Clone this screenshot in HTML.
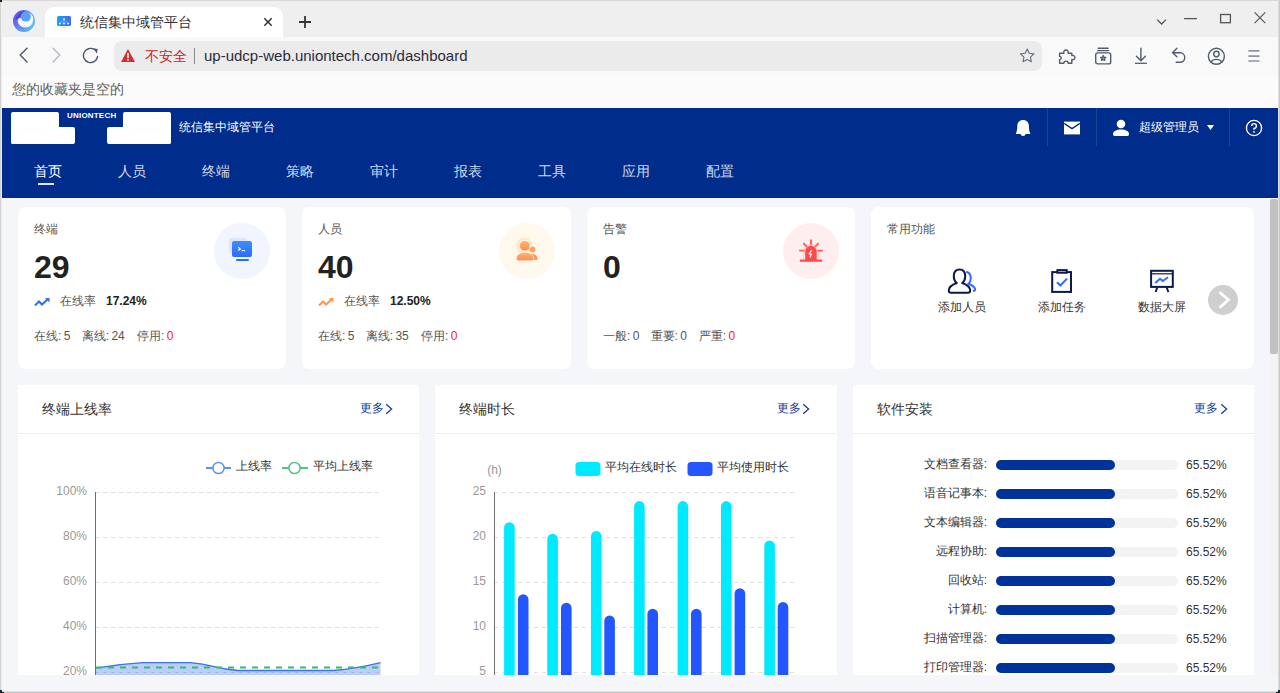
<!DOCTYPE html>
<html><head><meta charset="utf-8">
<style>
*{box-sizing:border-box;margin:0;padding:0}
html,body{width:1280px;height:693px;overflow:hidden;background:#fff;font-family:"Liberation Sans",sans-serif}
.abs{position:absolute}
#win{position:absolute;left:0;top:0;width:1280px;height:693px;background:#f5f6fa;overflow:hidden}
/* browser chrome */
#tabbar{left:0;top:0;width:1280px;height:37px;background:#efefef;border-top:1px solid #d8d8d8}
#tab{left:45px;top:7px;width:238px;height:30px;background:#fff;border-radius:9px 9px 0 0}
#toolbar{left:0;top:37px;width:1280px;height:37px;background:#f9f9f9}
#urlbar{left:114px;top:41px;width:928px;height:30px;background:#ebebeb;border-radius:8px}
#bmbar{left:0;top:74px;width:1280px;height:34px;background:#fbfbfb}
.ico{stroke:#535d6e;fill:none;stroke-width:1.4;stroke-linecap:round;stroke-linejoin:round}
/* app header */
#hdr{left:2px;top:108px;width:1276px;height:90px;background:#002c8b}
.nav{position:absolute;top:161px;color:#d3daea;font-size:14px;line-height:20px}
.vdiv{position:absolute;top:108px;width:1px;height:38px;background:#1f459a}
/* content */
.card{position:absolute;background:#fff;border-radius:8px}
.ctitle{position:absolute;font-size:12px;color:#555;line-height:16px}
.bignum{position:absolute;font-size:32px;font-weight:bold;color:#222;line-height:32px}
.small{position:absolute;font-size:12px;color:#555;line-height:14px;white-space:nowrap}
.panel{position:absolute;background:#fff;border-radius:2px}
.ptitle{position:absolute;left:24px;top:15px;font-size:14px;color:#333;line-height:18px}
.more{position:absolute;top:15px;font-size:12px;color:#163a98;line-height:16px}
.pline{position:absolute;left:0;top:48px;height:1px;background:#eaecf0}
.sw-row{position:absolute;left:0;width:400px;height:20px}
.sw-label{position:absolute;right:258px;font-size:13px;color:#333;line-height:16px;white-space:nowrap}
.sw-track{position:absolute;left:143px;top:4px;width:182px;height:10px;background:#f1f2f4;border-radius:5px}
.sw-bar{position:absolute;left:0;top:0;width:119px;height:10px;background:#003399;border-radius:5px}
.sw-pct{position:absolute;left:333px;font-size:12px;color:#333;line-height:14px}
</style></head>
<body>
<div id="win">
<!-- TAB BAR -->
<div id="tabbar" class="abs"></div>
<div class="abs" style="left:0;top:0;width:1px;height:693px;background:#d2d2d2;z-index:50"></div>
<div class="abs" style="left:1px;top:37px;width:1px;height:654px;background:#ececec;z-index:50"></div>
<div class="abs" style="left:1278px;top:0;width:1px;height:693px;background:#dedede;z-index:50"></div>
<div class="abs" style="left:1279px;top:0;width:1px;height:693px;background:#c9c9c9;z-index:50"></div>
<div class="abs" style="left:0;top:691px;width:1280px;height:1px;background:#dcdcdc;z-index:50"></div>
<div class="abs" style="left:0;top:692px;width:1280px;height:1px;background:#c8c8c8;z-index:50"></div>
<div class="abs" style="left:0;top:0;width:2px;height:2px;background:#222;z-index:51"></div>
<div class="abs" style="left:0;top:690px;width:2px;height:3px;background:#0d2a2a;z-index:51"></div>
<div class="abs" style="left:2px;top:692px;width:2px;height:1px;background:#0d2a2a;z-index:51"></div>
<div class="abs" style="left:1278px;top:690px;width:2px;height:3px;background:#0d2a2a;z-index:51"></div>
<div class="abs" style="left:1276px;top:692px;width:2px;height:1px;background:#0d2a2a;z-index:51"></div>
<div class="abs" style="left:2px;top:675px;width:1276px;height:16px;background:#f5f6fa;z-index:40"></div>
<!-- logo -->
<svg class="abs" style="left:13px;top:10px" width="22" height="22" viewBox="0 0 22 22">
<defs><linearGradient id="lg1" x1="0" y1="0.1" x2="1" y2="0.6"><stop offset="0" stop-color="#5a4ef0"/><stop offset="0.55" stop-color="#6b8af6"/><stop offset="1" stop-color="#4cc6f6"/></linearGradient>
<clipPath id="cp1"><circle cx="11" cy="11" r="11"/></clipPath></defs>
<circle cx="11" cy="11" r="11" fill="url(#lg1)"/>
<g clip-path="url(#cp1)">
<circle cx="12.4" cy="9.6" r="7.9" fill="#f6f7fb"/>
<path d="M2.5 9.5Q3.5 3 10.5 0.5L12.5 2Q8.2 3.8 7.6 8.2Q6 6.8 4.8 9.8Z" fill="#4b42ec"/>
<circle cx="12.8" cy="6.6" r="5" fill="#5aa0fb"/>
</g></svg>
<div id="tab" class="abs"></div>
<svg class="abs" style="left:57px;top:15px" width="14" height="14" viewBox="0 0 14 14">
<defs><linearGradient id="lg2" x1="0" y1="0" x2="1" y2="0"><stop offset="0" stop-color="#17a5ee"/><stop offset="1" stop-color="#3f66f6"/></linearGradient></defs>
<rect x="0" y="1" width="14" height="10" rx="1.6" fill="url(#lg2)"/>
<circle cx="7" cy="4.3" r="1.1" fill="#e8f2ff"/>
<path d="M2.8 8.5V7H11.2V8.5M7 5.5V7" stroke="#7cc4f8" stroke-width="0.7" fill="none"/>
<rect x="1.8" y="8" width="2" height="1.3" rx=".5" fill="#fff"/><rect x="6" y="8" width="2" height="1.3" rx=".5" fill="#fff"/><rect x="10.2" y="8" width="2" height="1.3" rx=".5" fill="#fff"/>
<rect x="5" y="12" width="4" height="1" fill="#e4e6ea"/>
</svg>
<div class="abs" style="left:80px;top:12px;font-size:14px;color:#333;line-height:20px">统信集中域管平台</div>
<svg class="abs" style="left:262px;top:16px" width="12" height="12" viewBox="0 0 12 12"><path d="M2.3 2.3L9.7 9.7M9.7 2.3L2.3 9.7" stroke="#333" stroke-width="1.5"/></svg>
<svg class="abs" style="left:298px;top:15px" width="14" height="14" viewBox="0 0 14 14"><path d="M7 1V13M1 7H13" stroke="#333" stroke-width="1.8"/></svg>
<!-- window controls -->
<svg class="abs" style="left:1154px;top:14px" width="14" height="14" viewBox="0 0 14 14"><path d="M3.2 5.6L7.6 10L12 5.6" stroke="#505050" stroke-width="1.3" fill="none"/></svg>
<svg class="abs" style="left:1183px;top:11px" width="16" height="14" viewBox="0 0 16 14"><path d="M1.1 7.6H14" stroke="#555" stroke-width="1.3"/></svg>
<svg class="abs" style="left:1218px;top:12px" width="16" height="14" viewBox="0 0 16 14"><rect x="2.6" y="2.5" width="9.8" height="8.2" stroke="#555" stroke-width="1.3" fill="none"/></svg>
<svg class="abs" style="left:1252px;top:10px" width="16" height="16" viewBox="0 0 16 16"><path d="M2.6 2.4L13.3 13.1M13.3 2.4L2.6 13.1" stroke="#585858" stroke-width="1.2"/></svg>
<!-- TOOLBAR -->
<div id="toolbar" class="abs"></div>
<svg class="abs" style="left:16px;top:47px" width="16" height="18" viewBox="0 0 16 18"><path d="M11 1.3L4.2 8.1L11 14.9" stroke="#4e596b" stroke-width="1.4" fill="none" stroke-linecap="round" stroke-linejoin="round"/></svg>
<svg class="abs" style="left:48px;top:47px" width="16" height="18" viewBox="0 0 16 18"><path d="M5 1.3L11.8 8.1L5 14.9" stroke="#b3b9c4" stroke-width="1.4" fill="none" stroke-linecap="round" stroke-linejoin="round"/></svg>
<svg class="abs" style="left:81px;top:47px" width="18" height="18" viewBox="0 0 18 18"><path d="M16.6 9.4A7.1 7.1 0 1 1 13.2 2.4" stroke="#4e596b" stroke-width="1.4" fill="none" stroke-linecap="round"/><path d="M12 1.3L16.7 1.9L15.9 6.4Z" fill="#4e596b"/></svg>
<div id="urlbar" class="abs"></div>
<svg class="abs" style="left:120px;top:48px" width="16" height="15" viewBox="0 0 16 15"><path d="M8 1L15 14H1Z" fill="#d32f2f"/><rect x="7.2" y="5" width="1.6" height="5" fill="#fff"/><rect x="7.2" y="11" width="1.6" height="1.6" fill="#fff"/></svg>
<div class="abs" style="left:145px;top:46px;font-size:14px;color:#c62828;line-height:20px">不安全</div>
<div class="abs" style="left:194px;top:48px;width:1px;height:16px;background:#888"></div>
<div class="abs" style="left:204px;top:46px;font-size:15px;color:#2b2b3a;line-height:20px;letter-spacing:0px">up-udcp-web.uniontech.com/dashboard</div>
<svg class="abs" style="left:1018px;top:47px" width="18" height="18" viewBox="0 0 18 18"><path d="M9.2 2.1L11.2 6.3L15.9 6.9L12.5 10.1L13.3 14.8L9.2 12.6L5.1 14.8L5.9 10.1L2.5 6.9L7.2 6.3Z" stroke="#687184" stroke-width="1.15" fill="none" stroke-linejoin="round"/></svg>
<svg class="abs" style="left:1057px;top:47px" width="19" height="18" viewBox="0 0 19 18"><path d="M2.6 6.3H6.9A2.3 2.3 0 1 1 11.1 6.3H14.8V8.6A2.2 2.2 0 1 1 14.8 12.6V16.3H11.2A2.2 2.2 0 0 0 6.8 16.3H2.6V12.6A1.6 1.6 0 0 0 2.6 9.4Z" class="ico" stroke-width="1.4"/></svg>
<svg class="abs" style="left:1094px;top:47px" width="18" height="18" viewBox="0 0 18 18"><rect x="1.7" y="5.9" width="15" height="11" rx="2" class="ico" stroke-width="1.35"/><path d="M3.6 3.6H14.6M4.1 1.3H14.1" class="ico" stroke-width="1.1"/><path d="M9.2 8.6L9.9 10.3L11.7 10.4L10.3 11.5L10.8 13.3L9.2 12.3L7.6 13.3L8.1 11.5L6.7 10.4L8.5 10.3Z" class="ico" stroke-width="1"/></svg>
<svg class="abs" style="left:1132px;top:47px" width="18" height="18" viewBox="0 0 18 18"><path d="M8.9 1.3V13.5M4.4 9.2L8.9 13.7L13.4 9.2" class="ico" stroke-width="1.3"/><path d="M3 16.3H14.9" stroke="#535d6e" stroke-width="1.3"/></svg>
<svg class="abs" style="left:1170px;top:47px" width="18" height="18" viewBox="0 0 18 18"><path d="M6.9 1.3L2.6 5.8L6.9 9.8M2.6 5.8H10A4.7 4.7 0 0 1 10 15.3H6.2" class="ico" stroke-width="1.3"/></svg>
<svg class="abs" style="left:1207px;top:47px" width="19" height="19" viewBox="0 0 19 19"><circle cx="9.4" cy="9.3" r="8" class="ico" stroke-width="1.3"/><circle cx="9.4" cy="7" r="2.7" class="ico" stroke-width="1.3"/><path d="M3.9 15A6.3 5.2 0 0 1 14.9 15" class="ico" stroke-width="1.3"/></svg>
<svg class="abs" style="left:1245px;top:47px" width="18" height="18" viewBox="0 0 18 18"><path d="M3.4 3.8H14.5M3.4 9.2H14.5M3.4 14H14.5" stroke="#8d95a4" stroke-width="1.7"/></svg>
<!-- BOOKMARK BAR -->
<div id="bmbar" class="abs"></div>
<div class="abs" style="left:12px;top:79px;font-size:14px;color:#606060;line-height:20px">您的收藏夹是空的</div>

<!-- APP HEADER -->
<div id="hdr" class="abs"></div>
<!-- logo -->
<div class="abs" style="left:11px;top:112px;width:48px;height:32px;background:#fff;border-radius:2px"></div>
<div class="abs" style="left:11px;top:127px;width:64px;height:17px;background:#fff;border-radius:2px"></div>
<div class="abs" style="left:123px;top:112px;width:48px;height:32px;background:#fff;border-radius:2px"></div>
<div class="abs" style="left:107px;top:127px;width:64px;height:17px;background:#fff;border-radius:2px"></div>
<div class="abs" style="left:67px;top:112px;font-size:8px;font-weight:bold;color:#fff;line-height:8px;letter-spacing:0.2px">UNIONTECH</div>
<div class="abs" style="left:179px;top:118px;font-size:12px;color:#fff;line-height:18px">统信集中域管平台</div>
<!-- right icons -->
<svg class="abs" style="left:1015px;top:119px" width="17" height="18" viewBox="0 0 17 18"><path d="M8.1 0.9C4.7 0.9 2.3 3.3 2.3 7C2.3 10 1.9 12.4 1 14.2V15H15.2V14.2C14.3 12.4 13.9 10 13.9 7C13.9 3.3 11.5 0.9 8.1 0.9Z" fill="#fff"/><path d="M5.4 14.5H10.8C10.5 16.2 9.5 17 8.1 17C6.7 17 5.7 16.2 5.4 14.5Z" fill="#fff"/></svg>
<div class="vdiv" style="left:1047px"></div>
<svg class="abs" style="left:1063px;top:121px" width="18" height="14" viewBox="0 0 18 14"><path d="M1 0.6H17V13.4H1Z" fill="#fff"/><path d="M1.2 2.4L9 7.6L16.8 2.4" stroke="#002c8b" stroke-width="1.3" fill="none"/></svg>
<div class="vdiv" style="left:1096px"></div>
<svg class="abs" style="left:1112px;top:119px" width="18" height="18" viewBox="0 0 18 18"><circle cx="9" cy="5" r="4.3" fill="#fff"/><path d="M1 15C1 12 4.5 10.5 9 10.5S17 12 17 15C17 16.4 16.3 17 15 17H3C1.7 17 1 16.4 1 15Z" fill="#fff"/></svg>
<div class="abs" style="left:1139px;top:118px;font-size:12px;color:#fff;line-height:18px">超级管理员</div>
<svg class="abs" style="left:1207px;top:125px" width="7" height="5" viewBox="0 0 7 5"><path d="M0 0H7L3.5 5Z" fill="#fff"/></svg>
<div class="vdiv" style="left:1229px"></div>
<svg class="abs" style="left:1244px;top:118px" width="20" height="20" viewBox="0 0 20 20"><circle cx="10" cy="10" r="7.6" stroke="#fff" stroke-width="1.4" fill="none"/><path d="M7.6 8A2.4 2.4 0 1 1 10 10.4V11.8" stroke="#fff" stroke-width="1.4" fill="none"/><circle cx="10" cy="13.9" r="0.9" fill="#fff"/></svg>
<!-- nav -->
<div class="nav" style="left:34px;color:#fff">首页</div>
<div class="abs" style="left:38px;top:183px;width:16px;height:2px;background:#dfe5f3"></div>
<div class="nav" style="left:118px">人员</div>
<div class="nav" style="left:202px">终端</div>
<div class="nav" style="left:286px">策略</div>
<div class="nav" style="left:370px">审计</div>
<div class="nav" style="left:454px">报表</div>
<div class="nav" style="left:538px">工具</div>
<div class="nav" style="left:622px">应用</div>
<div class="nav" style="left:706px">配置</div>

<!-- scrollbar -->
<div class="abs" style="left:1270px;top:198px;width:8px;height:477px;background:#f3f3f3"></div>
<div class="abs" style="left:1270px;top:199px;width:8px;height:155px;background:#c1c1c1;border-radius:2px"></div>

<!-- ROW 1 CARDS -->
<div class="card" style="left:18px;top:207px;width:268px;height:162px">
  <div class="ctitle" style="left:16px;top:14px">终端</div>
  <div class="bignum" style="left:16px;top:44px">29</div>
  <div class="abs" style="left:196px;top:16px;width:56px;height:56px;border-radius:50%;background:#f1f5ff"></div>
  <div class="abs" style="left:211px;top:31px;width:18px;height:15px;background:#dce6fd;border-radius:2px"></div>
  <div class="abs" style="left:214px;top:34px;width:20px;height:16px;background:linear-gradient(180deg,#3c8dff,#2f6cf6);border-radius:2px"></div>
  <svg class="abs" style="left:214px;top:34px" width="20" height="16" viewBox="0 0 20 16"><path d="M6.2 6.3L8.3 7.9L6.2 9.5" stroke="#fff" stroke-width="1.2" fill="none"/><path d="M9.6 9.6H13" stroke="#fff" stroke-width="1.1"/></svg>
  <div class="abs" style="left:218px;top:52px;width:12.5px;height:2px;background:#2f6cf6;border-radius:1px"></div>
  <svg class="abs" style="left:16px;top:90px" width="17" height="10" viewBox="0 0 17 10"><path d="M1 8.5L5 4.5L8 7.5L14 2" stroke="#2f6ff5" stroke-width="2" fill="none"/><path d="M11 1H15.5V5.5Z" fill="#2f6ff5"/></svg>
  <div class="small" style="left:42px;top:87px">在线率</div>
  <div class="small" style="left:88px;top:87px;font-weight:bold;color:#222">17.24%</div>
  <div class="small" style="left:16px;top:122px">在线:&thinsp;5</div>
  <div class="small" style="left:63.7px;top:122px">离线:&thinsp;24</div>
  <div class="small" style="left:119px;top:122px">停用:&thinsp;<span style="color:#f5222d">0</span></div>
</div>
<div class="card" style="left:302px;top:207px;width:269px;height:162px">
  <div class="ctitle" style="left:16px;top:14px">人员</div>
  <div class="bignum" style="left:16px;top:44px">40</div>
  <div class="abs" style="left:197px;top:16px;width:56px;height:56px;border-radius:50%;background:#fff8ec"></div>
  <svg class="abs" style="left:209px;top:29px" width="30" height="30" viewBox="0 0 30 30">
    <defs><linearGradient id="og" x1="0" y1="0" x2="0" y2="1"><stop offset="0" stop-color="#ffb777"/><stop offset="1" stop-color="#ff8a48"/></linearGradient></defs>
    <circle cx="13.2" cy="9.8" r="8.3" fill="#ffe9c9"/>
    <circle cx="21.5" cy="13.4" r="2.9" fill="#ffa463"/>
    <path d="M20.5 17.4C24 17.8 26.6 20.2 26.6 22.8C26.6 23.6 26.1 24 25.4 24H22Z" fill="#ff9752"/>
    <circle cx="13.8" cy="9.8" r="5.4" fill="url(#og)" stroke="#fff8ee" stroke-width="0.9"/>
    <path d="M5.3 22.5C5.3 18.6 9 16.2 14 16.2S22.7 18.6 22.7 22.5C22.7 24 22 24.9 20.5 24.9H7.5C6 24.9 5.3 24 5.3 22.5Z" fill="url(#og)" stroke="#fff8ee" stroke-width="0.9"/>
  </svg>
  <svg class="abs" style="left:16px;top:90px" width="17" height="10" viewBox="0 0 17 10"><path d="M1 8.5L5 4.5L8 7.5L14 2" stroke="#ff9550" stroke-width="2" fill="none"/><path d="M11 1H15.5V5.5Z" fill="#ff9550"/></svg>
  <div class="small" style="left:42px;top:87px">在线率</div>
  <div class="small" style="left:88px;top:87px;font-weight:bold;color:#222">12.50%</div>
  <div class="small" style="left:16px;top:122px">在线:&thinsp;5</div>
  <div class="small" style="left:63.7px;top:122px">离线:&thinsp;35</div>
  <div class="small" style="left:119px;top:122px">停用:&thinsp;<span style="color:#f5222d">0</span></div>
</div>
<div class="card" style="left:587px;top:207px;width:268px;height:162px">
  <div class="ctitle" style="left:16px;top:14px">告警</div>
  <div class="bignum" style="left:16px;top:44px">0</div>
  <div class="abs" style="left:196px;top:16px;width:56px;height:56px;border-radius:50%;background:#ffeeee"></div>
  <svg class="abs" style="left:211px;top:32px" width="26" height="24" viewBox="0 0 26 24">
    <path d="M7.2 21V12.6A5.75 5.75 0 0 1 18.7 12.6V21Z" fill="#ff4a4d"/>
    <path d="M5 21V12.5A8 8 0 0 1 21 12.5V21Z" fill="#ff4a4d" opacity=".12"/>
    <rect x="1.7" y="20.6" width="22.6" height="2.1" rx="1" fill="#ff4a4d"/>
    <path d="M13 1.2V5.2M5.9 4.6L8.6 7.4M20.1 4.6L17.4 7.4M1.9 11.6H5.8M20.2 11.6H24.1" stroke="#ff5a5c" stroke-width="1.9" stroke-linecap="round"/>
    <path d="M13.6 11.2L10.9 15H13.3L11.8 18.4" stroke="#fff" stroke-width="1.2" fill="none" stroke-linejoin="round"/>
  </svg>
  <div class="small" style="left:16px;top:122px">一般:&thinsp;0</div>
  <div class="small" style="left:63.5px;top:122px">重要:&thinsp;0</div>
  <div class="small" style="left:111.8px;top:122px">严重:&thinsp;<span style="color:#f5222d">0</span></div>
</div>
<div class="card" style="left:871px;top:207px;width:383px;height:162px">
  <div class="ctitle" style="left:16px;top:14px">常用功能</div>
  <div class="small" style="left:67px;top:93px;color:#333">添加人员</div>
  <div class="small" style="left:167px;top:93px;color:#333">添加任务</div>
  <div class="small" style="left:267px;top:93px;color:#333">数据大屏</div>
</div>
<svg class="abs" style="left:947px;top:268px" width="30" height="27" viewBox="0 0 30 27">
  <path d="M12.5 1.5C8.8 1.5 6.8 4.3 6.8 8.2C6.8 11.3 8 13.6 9.8 15C5 16.6 1.8 19.5 1.8 22.8C1.8 24.2 2.6 24.8 4 24.8H21C22.4 24.8 23.2 24.2 23.2 22.8C23.2 19.5 20 16.6 15.2 15C17 13.6 18.2 11.3 18.2 8.2C18.2 4.3 16.2 1.5 12.5 1.5Z" stroke="#0c1a4d" stroke-width="2" fill="none" stroke-linejoin="round"/>
  <path d="M20 4C22.6 4.8 23.8 7.2 23.8 10C23.8 12.4 23 14.5 21.5 15.8C25.5 17.4 28.2 19.4 28.2 21.6C28.2 22.4 27.6 22.8 26.8 22.8" stroke="#2f6bff" stroke-width="2" fill="none" stroke-linecap="round"/>
</svg>
<svg class="abs" style="left:1048px;top:266px" width="28" height="30" viewBox="1048 266 28 30">
  <rect x="1052.2" y="272.1" width="18.8" height="19.8" stroke="#0c1a4d" stroke-width="2" fill="#fff"/>
  <rect x="1057.4" y="270.1" width="9.3" height="2.6" stroke="#0c1a4d" stroke-width="2" fill="#fff"/>
  <path d="M1057 282.3L1060.3 285.5L1067 278.6" stroke="#2f6bff" stroke-width="2" fill="none"/>
</svg>
<svg class="abs" style="left:1147px;top:266px" width="30" height="28" viewBox="1147 266 30 28">
  <rect x="1151.1" y="270.8" width="21.7" height="16.1" stroke="#0c1a4d" stroke-width="2" fill="#fff"/>
  <path d="M1151 273.8H1173" stroke="#0c1a4d" stroke-width="1.2"/>
  <path d="M1157.3 287.5L1155.6 292M1166.7 287.5L1168.4 292" stroke="#0c1a4d" stroke-width="2"/>
  <path d="M1155.3 283L1160 278.7L1162.8 281L1168 277.3" stroke="#2f6bff" stroke-width="2" fill="none"/>
</svg>
<svg class="abs" style="left:1208px;top:285px" width="30" height="30" viewBox="0 0 30 30"><circle cx="15" cy="15" r="15" fill="#cfcfcf"/><path d="M11.5 7.3L20.4 14.8L11.5 22.8" stroke="#fff" stroke-width="2.8" fill="none"/></svg>

<!-- ROW 2 PANELS -->
<div class="panel" style="left:18px;top:385px;width:401px;height:300px">
  <div class="ptitle">终端上线率</div>
  <div class="more" style="left:342px">更多</div>
  <div class="pline" style="width:401px"></div>
</div>
<div class="panel" style="left:435px;top:385px;width:402px;height:300px">
  <div class="ptitle">终端时长</div>
  <div class="more" style="left:342px">更多</div>
  <div class="pline" style="width:401px"></div>
</div>
<div class="panel" style="left:853px;top:385px;width:401px;height:300px">
  <div class="ptitle">软件安装</div>
  <div class="more" style="left:341px">更多</div>
  <div class="pline" style="width:401px"></div>
</div>
<svg class="abs" style="left:18px;top:433px" width="401" height="242" viewBox="18 433 401 242">
<line x1="95" y1="492.5" x2="381" y2="492.5" stroke="#e0e0e0" stroke-width="1" stroke-dasharray="4 4"/>
<text x="87" y="495.0" text-anchor="end" font-size="12" fill="#999" font-family="Liberation Sans">100%</text>
<line x1="95" y1="537.5" x2="381" y2="537.5" stroke="#e0e0e0" stroke-width="1" stroke-dasharray="4 4"/>
<text x="87" y="540.0" text-anchor="end" font-size="12" fill="#999" font-family="Liberation Sans">80%</text>
<line x1="95" y1="582.5" x2="381" y2="582.5" stroke="#e0e0e0" stroke-width="1" stroke-dasharray="4 4"/>
<text x="87" y="585.0" text-anchor="end" font-size="12" fill="#999" font-family="Liberation Sans">60%</text>
<line x1="95" y1="627.5" x2="381" y2="627.5" stroke="#e0e0e0" stroke-width="1" stroke-dasharray="4 4"/>
<text x="87" y="630.0" text-anchor="end" font-size="12" fill="#999" font-family="Liberation Sans">40%</text>
<line x1="95" y1="672.5" x2="381" y2="672.5" stroke="#e0e0e0" stroke-width="1" stroke-dasharray="4 4"/>
<text x="87" y="675.0" text-anchor="end" font-size="12" fill="#999" font-family="Liberation Sans">20%</text>
<path d="M95.5 668.1 C95.5 668.1 119.2 664.0 143.0 662.6 C166.7 662.6 166.9 662.6 190.5 662.6 C214.4 664.6 214.1 668.5 238.0 670.5 C261.6 670.5 261.8 670.5 285.5 670.5 C309.2 670.5 309.4 670.5 333.0 670.5 C356.9 668.5 380.5 662.6 380.5 662.6 L380.5 700 L95.5 700 Z" fill="#5b87f5" fill-opacity="0.42"/>
<path d="M95.5 668.1 C95.5 668.1 119.2 664.0 143.0 662.6 C166.7 662.6 166.9 662.6 190.5 662.6 C214.4 664.6 214.1 668.5 238.0 670.5 C261.6 670.5 261.8 670.5 285.5 670.5 C309.2 670.5 309.4 670.5 333.0 670.5 C356.9 668.5 380.5 662.6 380.5 662.6" fill="none" stroke="#3f6ff2" stroke-width="1.3"/>
<line x1="96" y1="667.5" x2="381" y2="667.5" stroke="#2fbf65" stroke-width="2" stroke-dasharray="6 6"/>
<line x1="95.5" y1="492" x2="95.5" y2="680" stroke="#6e6e6e" stroke-width="1"/>
<line x1="206" y1="468" x2="231" y2="468" stroke="#5b8ff9" stroke-width="2"/><circle cx="218.5" cy="468" r="5.6" fill="#fff" stroke="#5b8ff9" stroke-width="1.5"/>
<line x1="282" y1="468" x2="308" y2="468" stroke="#4fc57f" stroke-width="2"/><circle cx="294.5" cy="468" r="5.6" fill="#fff" stroke="#4fc57f" stroke-width="1.5"/>
</svg>
<div class="abs" style="left:236px;top:458px;font-size:12px;color:#333;line-height:16px">上线率</div>
<div class="abs" style="left:313px;top:458px;font-size:12px;color:#333;line-height:16px">平均上线率</div>
<svg class="abs" style="left:435px;top:433px" width="402" height="242" viewBox="435 433 402 242">
<line x1="494" y1="492.5" x2="795" y2="492.5" stroke="#e0e0e0" stroke-width="1" stroke-dasharray="4 4"/>
<text x="486" y="495.0" text-anchor="end" font-size="12" fill="#999" font-family="Liberation Sans">25</text>
<line x1="494" y1="537.5" x2="795" y2="537.5" stroke="#e0e0e0" stroke-width="1" stroke-dasharray="4 4"/>
<text x="486" y="540.0" text-anchor="end" font-size="12" fill="#999" font-family="Liberation Sans">20</text>
<line x1="494" y1="582.5" x2="795" y2="582.5" stroke="#e0e0e0" stroke-width="1" stroke-dasharray="4 4"/>
<text x="486" y="585.0" text-anchor="end" font-size="12" fill="#999" font-family="Liberation Sans">15</text>
<line x1="494" y1="627.5" x2="795" y2="627.5" stroke="#e0e0e0" stroke-width="1" stroke-dasharray="4 4"/>
<text x="486" y="630.0" text-anchor="end" font-size="12" fill="#999" font-family="Liberation Sans">10</text>
<line x1="494" y1="672.5" x2="795" y2="672.5" stroke="#e0e0e0" stroke-width="1" stroke-dasharray="4 4"/>
<text x="486" y="675.0" text-anchor="end" font-size="12" fill="#999" font-family="Liberation Sans">5</text>
<text x="494.5" y="474" text-anchor="middle" font-size="12" fill="#999" font-family="Liberation Sans">(h)</text>
<path d="M504.1 690 V527.50 A5.30 5.30 0 0 1 514.7 527.50 V690 Z" fill="#00eaff"/>
<path d="M547.3 690 V539.10 A5.30 5.30 0 0 1 557.9 539.10 V690 Z" fill="#00eaff"/>
<path d="M591.0 690 V536.30 A5.30 5.30 0 0 1 601.6 536.30 V690 Z" fill="#00eaff"/>
<path d="M634.1 690 V506.40 A5.30 5.30 0 0 1 644.7 506.40 V690 Z" fill="#00eaff"/>
<path d="M677.6 690 V506.40 A5.30 5.30 0 0 1 688.2 506.40 V690 Z" fill="#00eaff"/>
<path d="M721.0 690 V506.40 A5.30 5.30 0 0 1 731.6 506.40 V690 Z" fill="#00eaff"/>
<path d="M764.3 690 V545.80 A5.30 5.30 0 0 1 774.9 545.80 V690 Z" fill="#00eaff"/>
<path d="M517.9 690 V599.50 A5.30 5.30 0 0 1 528.5 599.50 V690 Z" fill="#2356ff"/>
<path d="M561.0 690 V608.00 A5.30 5.30 0 0 1 571.6 608.00 V690 Z" fill="#2356ff"/>
<path d="M604.3 690 V620.80 A5.30 5.30 0 0 1 614.9 620.80 V690 Z" fill="#2356ff"/>
<path d="M647.4 690 V614.05 A5.30 5.30 0 0 1 658.0 614.05 V690 Z" fill="#2356ff"/>
<path d="M691.0 690 V614.05 A5.30 5.30 0 0 1 701.6 614.05 V690 Z" fill="#2356ff"/>
<path d="M734.6 690 V593.50 A5.30 5.30 0 0 1 745.2 593.50 V690 Z" fill="#2356ff"/>
<path d="M777.7 690 V607.30 A5.30 5.30 0 0 1 788.3 607.30 V690 Z" fill="#2356ff"/>
<line x1="494.5" y1="492" x2="494.5" y2="680" stroke="#6e6e6e" stroke-width="1"/>
<rect x="575.5" y="462" width="25" height="14" rx="3.5" fill="#00eaff"/>
<rect x="687.5" y="462" width="25" height="14" rx="3.5" fill="#2356ff"/>
</svg>
<div class="abs" style="left:605px;top:459px;font-size:12px;color:#333;line-height:16px">平均在线时长</div>
<div class="abs" style="left:717px;top:459px;font-size:12px;color:#333;line-height:16px">平均使用时长</div>
<div class="abs" style="left:850px;top:455px;width:137px;text-align:right;font-size:12px;color:#333;line-height:18px;white-space:nowrap">文档查看器:</div>
<div class="abs" style="left:996px;top:460px;width:182px;height:10px;background:#f3f3f3;border-radius:5px"><div style="width:119px;height:10px;background:#003399;border-radius:5px"></div></div>
<div class="abs" style="left:1186px;top:457px;font-size:12px;color:#333;line-height:16px">65.52%</div>
<div class="abs" style="left:850px;top:484px;width:137px;text-align:right;font-size:12px;color:#333;line-height:18px;white-space:nowrap">语音记事本:</div>
<div class="abs" style="left:996px;top:489px;width:182px;height:10px;background:#f3f3f3;border-radius:5px"><div style="width:119px;height:10px;background:#003399;border-radius:5px"></div></div>
<div class="abs" style="left:1186px;top:486px;font-size:12px;color:#333;line-height:16px">65.52%</div>
<div class="abs" style="left:850px;top:513px;width:137px;text-align:right;font-size:12px;color:#333;line-height:18px;white-space:nowrap">文本编辑器:</div>
<div class="abs" style="left:996px;top:518px;width:182px;height:10px;background:#f3f3f3;border-radius:5px"><div style="width:119px;height:10px;background:#003399;border-radius:5px"></div></div>
<div class="abs" style="left:1186px;top:515px;font-size:12px;color:#333;line-height:16px">65.52%</div>
<div class="abs" style="left:850px;top:542px;width:137px;text-align:right;font-size:12px;color:#333;line-height:18px;white-space:nowrap">远程协助:</div>
<div class="abs" style="left:996px;top:547px;width:182px;height:10px;background:#f3f3f3;border-radius:5px"><div style="width:119px;height:10px;background:#003399;border-radius:5px"></div></div>
<div class="abs" style="left:1186px;top:544px;font-size:12px;color:#333;line-height:16px">65.52%</div>
<div class="abs" style="left:850px;top:571px;width:137px;text-align:right;font-size:12px;color:#333;line-height:18px;white-space:nowrap">回收站:</div>
<div class="abs" style="left:996px;top:576px;width:182px;height:10px;background:#f3f3f3;border-radius:5px"><div style="width:119px;height:10px;background:#003399;border-radius:5px"></div></div>
<div class="abs" style="left:1186px;top:573px;font-size:12px;color:#333;line-height:16px">65.52%</div>
<div class="abs" style="left:850px;top:600px;width:137px;text-align:right;font-size:12px;color:#333;line-height:18px;white-space:nowrap">计算机:</div>
<div class="abs" style="left:996px;top:605px;width:182px;height:10px;background:#f3f3f3;border-radius:5px"><div style="width:119px;height:10px;background:#003399;border-radius:5px"></div></div>
<div class="abs" style="left:1186px;top:602px;font-size:12px;color:#333;line-height:16px">65.52%</div>
<div class="abs" style="left:850px;top:629px;width:137px;text-align:right;font-size:12px;color:#333;line-height:18px;white-space:nowrap">扫描管理器:</div>
<div class="abs" style="left:996px;top:634px;width:182px;height:10px;background:#f3f3f3;border-radius:5px"><div style="width:119px;height:10px;background:#003399;border-radius:5px"></div></div>
<div class="abs" style="left:1186px;top:631px;font-size:12px;color:#333;line-height:16px">65.52%</div>
<div class="abs" style="left:850px;top:658px;width:137px;text-align:right;font-size:12px;color:#333;line-height:18px;white-space:nowrap">打印管理器:</div>
<div class="abs" style="left:996px;top:663px;width:182px;height:10px;background:#f3f3f3;border-radius:5px"><div style="width:119px;height:10px;background:#003399;border-radius:5px"></div></div>
<div class="abs" style="left:1186px;top:660px;font-size:12px;color:#333;line-height:16px">65.52%</div>
<svg class="abs" style="left:385px;top:403px" width="8" height="12" viewBox="0 0 8 12"><path d="M1.2 1.2L6.6 6L1.2 10.8" stroke="#1c3c95" stroke-width="1.3" fill="none"/></svg><svg class="abs" style="left:802px;top:403px" width="8" height="12" viewBox="0 0 8 12"><path d="M1.2 1.2L6.6 6L1.2 10.8" stroke="#1c3c95" stroke-width="1.3" fill="none"/></svg><svg class="abs" style="left:1220px;top:403px" width="8" height="12" viewBox="0 0 8 12"><path d="M1.2 1.2L6.6 6L1.2 10.8" stroke="#1c3c95" stroke-width="1.3" fill="none"/></svg>
</div>
</body></html>
